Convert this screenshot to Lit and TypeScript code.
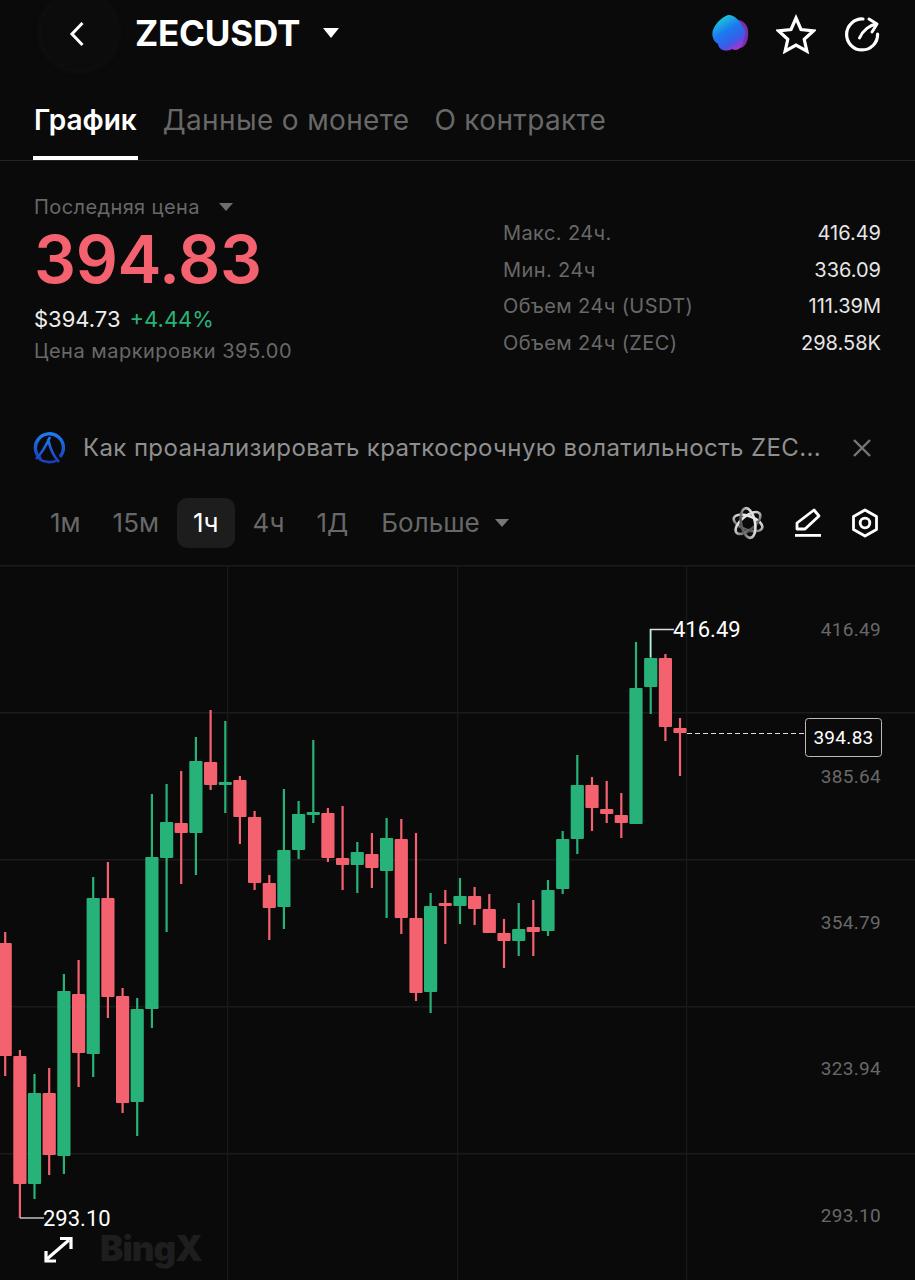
import { LitElement, html, css, svg } from "lit";
import { customElement } from "lit/decorators.js";

// [green?, bodyTop, bodyBottom, wickTop, wickBottom] in page y
const C: [number, number, number, number, number][] = [
  [0, 942, 1055, 931, 1075], [0, 1055, 1183, 1049, 1217], [1, 1092, 1183, 1073, 1198], [0, 1092, 1154, 1067, 1174],
  [1, 990, 1155, 973, 1173], [0, 993, 1052, 959, 1086], [1, 897, 1053, 876, 1076], [0, 897, 996, 861, 1017],
  [0, 995, 1102, 987, 1112], [1, 1008, 1101, 997, 1135], [1, 856, 1008, 793, 1027], [1, 821, 857, 783, 931],
  [0, 822, 832, 770, 883], [1, 760, 832, 736, 874], [0, 761, 784, 709, 789], [1, 781, 784, 720, 812],
  [0, 779, 816, 775, 843], [0, 816, 882, 810, 889], [0, 882, 907, 874, 939], [1, 849, 906, 788, 928],
  [1, 813, 849, 800, 858], [1, 811, 814, 739, 822], [0, 812, 857, 807, 861], [0, 857, 864, 805, 889],
  [1, 851, 864, 841, 892], [0, 853, 867, 832, 887], [1, 837, 870, 817, 917], [0, 838, 917, 818, 933],
  [0, 917, 992, 832, 1000], [1, 905, 991, 892, 1012], [0, 902, 904, 889, 943], [1, 895, 905, 877, 923],
  [0, 895, 908, 886, 924], [0, 908, 932, 893, 932], [0, 932, 940, 918, 967], [1, 928, 940, 902, 955],
  [0, 926, 931, 899, 955], [1, 889, 930, 879, 935], [1, 838, 888, 830, 893], [1, 784, 838, 754, 853],
  [0, 784, 807, 776, 830], [0, 808, 813, 780, 822], [0, 814, 822, 792, 837], [1, 687, 823, 641, 823],
  [1, 657, 686, 628, 713], [0, 657, 726, 653, 740], [0, 727, 732, 717, 775],
];
const TOP = 563;
const STEP = 14.67;
const X0 = 5.2;
const GREEN = "#27b27a";
const RED = "#f4626f";

const AXIS: [string, number][] = [["416.49", 628], ["385.64", 775], ["354.79", 921], ["323.94", 1067], ["293.10", 1214]];

@customElement("app-root")
export class AppRoot extends LitElement {
  static styles = css`
    :host { display: block; width: 915px; height: 1280px; background: #0a0a0a; color: #fff; overflow: hidden;
      font-family: Inter, "Noto Sans", sans-serif; }
    .head { height: 67px; display: flex; align-items: center; padding: 0 34px 0 0; position: relative; }
    .halo { position: absolute; left: 41px; top: -6px; width: 76px; height: 76px; border-radius: 50%;
      background: #0c0c0c; box-shadow: 0 0 6px 1px #141414; }
    .back { position: relative; margin-left: 68px; width: 22px; height: 32px; display: block; }
    .sym { position: relative; margin-left: 45px; font-size: 35px; font-weight: 700; letter-spacing: -0.2px; line-height: 67px; }
    .caret { width: 0; height: 0; border-left: 8px solid transparent; border-right: 8px solid transparent; border-top: 10px solid #fff; margin-left: 23px; margin-top: -2px; }
    .head-ic { margin-left: auto; display: flex; align-items: center; gap: 27px; }
    .tabs { height: 93px; display: flex; padding-left: 33px; gap: 25px; border-bottom: 1px solid #232323; box-sizing: content-box; }
    .tab { font-size: 28px; color: #686868; line-height: 26px; padding-top: 40px; height: 53px; letter-spacing: 0.35px; }
    .tab.on { color: #fff; font-weight: 600; border-bottom: 4px solid #fff; height: 49px; padding-left: 1px; padding-right: 1px; letter-spacing: 0; }
    .stats { display: flex; justify-content: space-between; padding: 34px 34px 0; height: 230px; box-sizing: border-box; }
    .lbl { font-size: 20px; line-height: 24px; color: #686868; letter-spacing: 0.4px; display: flex; align-items: center; }
    .tri { width: 0; height: 0; border-left: 7px solid transparent; border-right: 7px solid transparent; border-top: 8px solid #6e6e6e; margin-left: 19px; }
    .price { font-size: 66px; font-weight: 600; line-height: 80px; color: #f4626f; margin-top: 0; letter-spacing: -0.3px; }
    .sub { font-size: 22px; line-height: 26px; margin-top: 7px; color: #eee; display: flex; gap: 9px; }
    .sub b { color: #27b27a; font-weight: 400; }
    .mark { font-size: 20px; line-height: 24px; color: #686868; margin-top: 7px; letter-spacing: 0.5px; }
    .right { width: 378px; padding-top: 20px; display: flex; flex-direction: column; }
    .row { display: flex; justify-content: space-between; height: 36.6px; align-items: center; font-size: 20px; color: #686868; letter-spacing: 0.4px; }
    .row span:last-child { color: #e6e6e6; letter-spacing: 0; }
    .note { height: 51px; display: flex; align-items: center; margin-top: 31px; padding-left: 33px; }
    .note-t { font-size: 24px; color: #8f8f8f; margin-left: 18px; width: 743px; white-space: nowrap; letter-spacing: 0.38px; }
    .note-x { margin-left: 26px; display: block; }
    .tf { height: 50px; margin-top: 25px; display: flex; align-items: center; padding-left: 34px; }
    .t { font-size: 26px; color: #686868; padding: 0 16px; height: 50px; line-height: 50px; }
    .t.on { color: #fff; background: #1d1d1d; border-radius: 10px; margin: 0 2px; }
    .more { display: flex; align-items: center; gap: 15px; padding-left: 17px; }
    .tf .tri { border-top-color: #777; margin: 0; }
    .tf-ic { margin-left: auto; display: flex; align-items: center; gap: 29px; padding-right: 36px; }
    .chart { display: block; margin-top: 16px; }
    svg text { font-family: Roboto, sans-serif; }
    svg { flex: none; }
  `;

  private candles() {
    return C.map(([g, bt, bb, wt, wb], i) => {
      const x = X0 + i * STEP;
      const col = g ? GREEN : RED;
      return svg`<rect x=${(x - 1.1).toFixed(1)} y=${wt - TOP} width="2.2" height=${wb - wt} fill=${col}/>
        <rect x=${(x - 6.6).toFixed(1)} y=${bt - TOP} width="13.2" height=${Math.max(bb - bt, 3)} rx="1" fill=${col}/>`;
    });
  }

  render() {
    return html`
      <div class="head">
        <div class="halo"></div>
        <svg class="back" viewBox="0 0 22 32"><path d="M14.5 5 L4 16 L14.5 27" fill="none" stroke="#fff" stroke-width="3"/></svg>
        <div class="sym">ZECUSDT</div>
        <div class="caret"></div>
        <div class="head-ic">
          <svg width="38" height="40" viewBox="0 0 38 40">
            <defs>
              <linearGradient id="bl" x1="0.2" y1="0.1" x2="0.7" y2="1">
                <stop offset="0" stop-color="#19c8d8"/><stop offset="0.4" stop-color="#1c7af0"/><stop offset="0.75" stop-color="#3a5be8"/><stop offset="1" stop-color="#b32fc8"/>
              </linearGradient>
              <filter id="bf"><feGaussianBlur stdDeviation="0.5"/></filter>
            </defs>
            <g filter="url(#bf)">
              <path d="M24 6 C30 5 37 10 37 17 C38 24 35 34 29 34 C24 34 22 20 24 6Z" fill="#7b2fb0"/>
              <path d="M17 1 C22 0 29 6 31 12 C36 17 34 22 32 26 C32 33 27 38 21 35 C16 38 8 37 7 30 C1 27 0 18 3 14 C5 9 11 3 17 1Z" fill="url(#bl)"/>
            </g>
          </svg>
          <svg width="40" height="40" viewBox="0 0 40 40"><path d="M20 4 L25 15.5 L37.5 16.8 L28.2 25.3 L30.9 37.2 L20 31 L9.1 37.2 L11.8 25.3 L2.5 16.8 L15 15.5Z" fill="none" stroke="#fff" stroke-width="3.2" stroke-linejoin="miter"/></svg>
          <svg width="38" height="40" viewBox="0 0 38 40"><path d="M20 5 A15.5 15.5 0 1 0 34.6 20" fill="none" stroke="#fff" stroke-width="3.2" stroke-linecap="round"/><path d="M26 5 L34 10 L29 18 M33.5 10 C27 11 20 16 16.5 24" fill="none" stroke="#fff" stroke-width="3" stroke-linecap="round" stroke-linejoin="round"/></svg>
        </div>
      </div>
      <div class="tabs">
        <div class="tab on">График</div>
        <div class="tab">Данные о монете</div>
        <div class="tab">О контракте</div>
      </div>
      <div class="stats">
        <div>
          <div class="lbl">Последняя цена<span class="tri"></span></div>
          <div class="price">394.83</div>
          <div class="sub">$394.73 <b>+4.44%</b></div>
          <div class="mark">Цена маркировки 395.00</div>
        </div>
        <div class="right">
          <div class="row"><span>Макс. 24ч.</span><span>416.49</span></div>
          <div class="row"><span>Мин. 24ч</span><span>336.09</span></div>
          <div class="row"><span>Объем 24ч (USDT)</span><span>111.39M</span></div>
          <div class="row"><span>Объем 24ч (ZEC)</span><span>298.58K</span></div>
        </div>
      </div>
      <div class="note">
        <svg width="32" height="32" viewBox="0 0 32 32">
          <defs><linearGradient id="nb" x1="0" y1="0" x2="0" y2="1"><stop offset="0" stop-color="#1e7bf2"/><stop offset="1" stop-color="#1a3fc0"/></linearGradient></defs>
          <path d="M8 27 A14 14 0 1 1 27 25" fill="none" stroke="url(#nb)" stroke-width="3.4"/>
          <path d="M3 27 C8 22 13 14 17 5 M15 7 C17 16 21 25 26 30 M6 27 C12 31 20 31 25 28" fill="none" stroke="url(#nb)" stroke-width="2.6"/>
        </svg>
        <div class="note-t">Как проанализировать краткосрочную волатильность ZEC...</div>
        <svg class="note-x" width="20" height="20" viewBox="0 0 20 20"><path d="M2 2 L18 18 M18 2 L2 18" stroke="#777" stroke-width="2.4"/></svg>
      </div>
      <div class="tf">
        <div class="t">1м</div>
        <div class="t">15м</div>
        <div class="t on">1ч</div>
        <div class="t">4ч</div>
        <div class="t">1Д</div>
        <div class="t more">Больше<span class="tri"></span></div>
        <div class="tf-ic">
          <svg width="34" height="34" viewBox="0 0 34 34">
            <defs><linearGradient id="at" x1="0" y1="0" x2="0" y2="1"><stop offset="0" stop-color="#e8e8e8"/><stop offset="0.6" stop-color="#aaa"/><stop offset="1" stop-color="#555"/></linearGradient></defs>
            <g fill="none" stroke="url(#at)" stroke-width="2.6">
              <ellipse cx="17" cy="17" rx="15" ry="7" transform="rotate(20 17 17)"/>
              <ellipse cx="17" cy="17" rx="15" ry="7" transform="rotate(-40 17 17)"/>
              <ellipse cx="17" cy="17" rx="15" ry="7" transform="rotate(80 17 17)"/>
            </g>
          </svg>
          <svg width="28" height="30" viewBox="0 0 28 30">
            <path d="M20 2 L25 8 L11 21 L3 21 L3 15Z" fill="none" stroke="#fff" stroke-width="2.8" stroke-linejoin="round"/>
            <rect x="1" y="26" width="26" height="2.8" fill="#fff"/>
          </svg>
          <svg width="28" height="30" viewBox="0 0 28 30">
            <path d="M14 2 L25.5 8.5 L25.5 21.5 L14 28 L2.5 21.5 L2.5 8.5Z" fill="none" stroke="#fff" stroke-width="2.8" stroke-linejoin="round"/>
            <circle cx="14" cy="15" r="4.8" fill="none" stroke="#fff" stroke-width="2.8"/>
          </svg>
        </div>
      </div>
      <svg class="chart" width="915" height=${1280 - TOP} viewBox="0 0 915 ${1280 - TOP}">
        ${[564, 711, 858, 1005, 1152].map((y) => svg`<rect x="0" y=${y - TOP} width="915" height="1.5" fill="#1b1b1b"/>`)}
        ${[227, 457, 686].map((x) => svg`<rect x=${x} y="1" width="1.3" height="716" fill="#191919"/>`)}
        <text x="100" y=${1260 - TOP} font-size="35" font-weight="900" fill="#1e1e1e" style="font-family:Inter,sans-serif" letter-spacing="-1">BingX</text>
        ${this.candles()}
        ${AXIS.map(([t, y]) => svg`<text x="881" y=${y + 7 - TOP} text-anchor="end" font-size="19" fill="#686868" letter-spacing="0.3">${t}</text>`)}
        <path d="M650.5 ${656 - TOP} V${628.5 - TOP} H674" fill="none" stroke="#ddd" stroke-width="1.3"/>
        <text x="673" y=${636 - TOP} font-size="22" fill="#fff">416.49</text>
        <path d="M20 ${1217 - TOP} H44" fill="none" stroke="#ddd" stroke-width="1.3"/>
        <text x="43" y=${1225 - TOP} font-size="22" fill="#fff">293.10</text>
        <path d="M687 ${732.5 - TOP} H805" fill="none" stroke="#ddd" stroke-width="1.2" stroke-dasharray="5 3"/>
        <rect x="805.5" y=${717.5 - TOP} width="76" height="38" rx="3" fill="#0a0a0a" stroke="#bbb" stroke-width="1"/>
        <text x="843.5" y=${743 - TOP} text-anchor="middle" font-size="19" fill="#fff" letter-spacing="0.3">394.83</text>
        <g transform="translate(0 ${-TOP})" fill="none" stroke="#fff" stroke-width="3.2">
          <path d="M47 1258 L69 1239"/>
          <path d="M60 1237.5 H71 V1248" stroke-width="3.2"/>
          <path d="M46 1250 V1260 H56"/>
        </g>
      </svg>
    `;
  }
}
